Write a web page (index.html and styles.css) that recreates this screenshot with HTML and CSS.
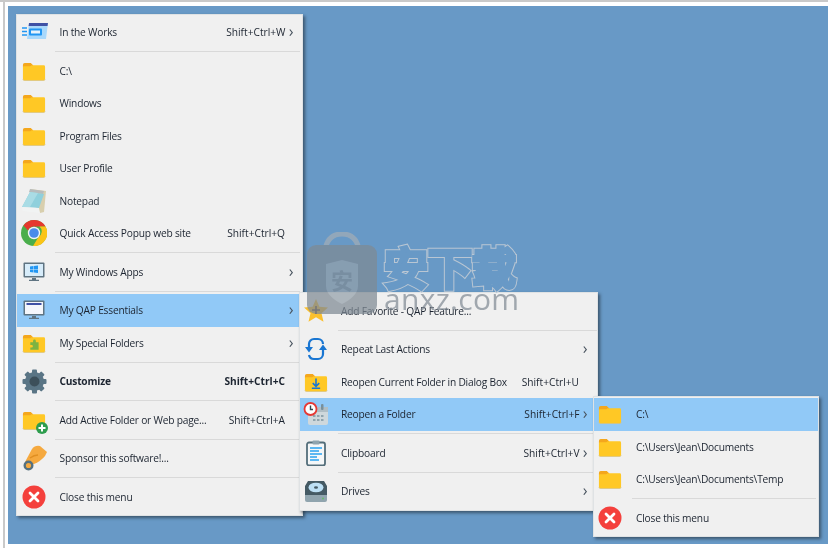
FILE: index.html
```html
<!DOCTYPE html>
<html lang="en">
<head>
<meta charset="utf-8">
<title>Quick Access Popup</title>
<link rel="stylesheet" href="styles.css">
</head>
<body>
<svg class="defs" width="0" height="0" aria-hidden="true">
  <defs>
    <symbol id="folder" viewBox="0 0 26 22">
      <path d="M1 4a2 2 0 0 1 2-2h6.500l2.500 2.500v2H1z" fill="#f4a71d"/>
      <path d="M1 6.500a1 1 0 0 1 1-1h7l1.500-1H23.500a1.500 1.500 0 0 1 1.500 1.500V19.500a1.500 1.500 0 0 1-1.500 1.500H2.500A1.500 1.500 0 0 1 1 19.500z" fill="#ffc825"/>
      <path d="M1 19.500a1.500 1.500 0 0 0 1.500 1.500h21a1.500 1.500 0 0 0 1.500-1.500" fill="none" stroke="#d9c27e" stroke-width=".8"/>
    </symbol>
    <symbol id="close" viewBox="0 0 24 24">
      <circle cx="12" cy="12" r="11.500" fill="#f4403c"/>
      <path d="M8 8l8 8M16 8l-8 8" stroke="#fff" stroke-width="2.800" stroke-linecap="round"/>
    </symbol>
  </defs>
</svg>

<main class="desktop">
  <section class="menu menu-main">
    <div class="row">
      <span class="ico"><svg width="27" height="20" viewBox="0 0 27 20"><path d="M8 1h19l-2 16H6z" fill="#a9d8fb"/><path d="M8 1h19l-.5 3H7.600z" fill="#3f51a5"/><rect x="8" y="6.500" width="13" height="7" rx="1" fill="#2196f3"/><rect x="10" y="8.500" width="9" height="3" fill="#e8f3fb"/><path d="M1 6h5M1 9.500h5M1 13h5" stroke="#2196f3" stroke-width="1.500"/></svg></span>
      <span class="label">In the Works</span><span class="key">Shift+Ctrl+W</span><span class="arrow">›</span>
    </div>
    <div class="sep"></div>
    <div class="row"><span class="ico"><svg class="fold"><use href="#folder"/></svg></span><span class="label">C:\</span></div>
    <div class="row"><span class="ico"><svg class="fold"><use href="#folder"/></svg></span><span class="label">Windows</span></div>
    <div class="row"><span class="ico"><svg class="fold"><use href="#folder"/></svg></span><span class="label">Program Files</span></div>
    <div class="row"><span class="ico"><svg class="fold"><use href="#folder"/></svg></span><span class="label">User Profile</span></div>
    <div class="row">
      <span class="ico"><svg width="27" height="26" viewBox="0 0 27 26"><path d="M9 1l16 2-2 21-4 1L9 10z" fill="#d8cfae"/><path d="M9 1l14 2-1 3L8 4z" fill="#b7bcbd"/><path d="M9 4l14 2-5 14-17-1z" fill="#8fd0dc"/><path d="M9 4l8 1-8 14H1z" fill="#a9dce5"/><path d="M1 19l17 1 1 5-17-2z" fill="#f1f3f3"/></svg></span>
      <span class="label">Notepad</span>
    </div>
    <div class="row">
      <span class="ico"><svg width="26" height="26" viewBox="0 0 26 26"><circle cx="13" cy="13" r="13" fill="#4aae4c"/><path d="M13 0a13 13 0 0 1 11.500 6.500H13a6.500 6.500 0 0 0-6 4L2.500 5.500A13 13 0 0 1 13 0z" fill="#e5382e"/><path d="M24.500 6.500A13 13 0 0 1 12 26l5.500-9a6.500 6.500 0 0 0 1-10.500z" fill="#fbc417"/><circle cx="13" cy="13" r="6.200" fill="#f3f3f3"/><circle cx="13" cy="13" r="4.800" fill="#4a8be8"/></svg></span>
      <span class="label">Quick Access Popup web site</span><span class="key key-end">Shift+Ctrl+Q</span>
    </div>
    <div class="sep"></div>
    <div class="row">
      <span class="ico"><svg width="22" height="20" viewBox="0 0 22 20"><rect x=".5" y=".5" width="21" height="15" rx="1" fill="#5f7482"/><rect x="2" y="2" width="18" height="12" fill="#d7ecfa"/><path d="M7 4.500l3.500-.5v3H7zM11 4l4-.5V7h-4zM7 7.500h3.500v3L7 10zM11 7.500h4V11l-4-.5z" fill="#2196f3"/><path d="M9 16h4v1.800h3V19H6v-1.200h3z" fill="#5f7482"/></svg></span>
      <span class="label">My Windows Apps</span><span class="arrow">›</span>
    </div>
    <div class="sep"></div>
    <div class="row active">
      <span class="ico"><svg width="22" height="20" viewBox="0 0 22 20"><rect x=".5" y=".5" width="21" height="15" rx="1" fill="#5f7482"/><rect x="2" y="2" width="18" height="12" fill="#f4f6fb"/><rect x="3.500" y="3" width="15" height="2" fill="#3f51a5"/><path d="M9 16h4v1.800h3V19H6v-1.200h3z" fill="#5f7482"/></svg></span>
      <span class="label">My QAP Essentials</span><span class="arrow">›</span>
    </div>
    <div class="row">
      <span class="ico"><svg class="fold" viewBox="0 0 26 22"><use href="#folder"/><path d="M9 10h3V8.500a1.500 1.500 0 0 1 3 0V10h3v8H9v-2.500h1.500a1.300 1.300 0 0 0 0-2.600H9z" fill="#7cb342"/></svg></span>
      <span class="label">My Special Folders</span><span class="arrow">›</span>
    </div>
    <div class="sep"></div>
    <div class="row strong">
      <span class="ico"><svg width="25" height="25" viewBox="0 0 25 25"><g fill="#5a7585"><circle cx="12.500" cy="12.500" r="9.500"/><rect x="10" y=".5" width="5" height="24" rx="1"/><rect x="10" y=".5" width="5" height="24" rx="1" transform="rotate(45 12.500 12.500)"/><rect x="10" y=".5" width="5" height="24" rx="1" transform="rotate(90 12.500 12.500)"/><rect x="10" y=".5" width="5" height="24" rx="1" transform="rotate(135 12.500 12.500)"/></g><circle cx="12.500" cy="12.500" r="5" fill="#3c4f5a"/></svg></span>
      <span class="label">Customize</span><span class="key key-end">Shift+Ctrl+C</span>
    </div>
    <div class="sep"></div>
    <div class="row">
      <span class="ico ico-badge"><svg class="fold"><use href="#folder"/></svg><svg class="badge" width="12" height="12" viewBox="0 0 12 12"><circle cx="6" cy="6" r="6" fill="#2e9d4e"/><path d="M6 2.500v7M2.500 6h7" stroke="#fff" stroke-width="2"/></svg></span>
      <span class="label">Add Active Folder or Web page...</span><span class="key key-end">Shift+Ctrl+A</span>
    </div>
    <div class="sep"></div>
    <div class="row">
      <span class="ico"><svg width="26" height="27" viewBox="0 0 26 27"><path d="M4 17L11 4Q14 0 19 1L26 7L24 11Q20 16 13 19L9 20z" fill="#f5a93f"/><path d="M9 13q4-3 8-3" fill="none" stroke="#e08f22" stroke-width="1.500"/><circle cx="7.500" cy="20.500" r="3.800" fill="#f5a93f" stroke="#54707f" stroke-width="2.400"/></svg></span>
      <span class="label">Sponsor this software!...</span>
    </div>
    <div class="sep"></div>
    <div class="row"><span class="ico"><svg width="24" height="24"><use href="#close"/></svg></span><span class="label">Close this menu</span></div>
  </section>

  <section class="menu menu-sub">
    <div class="row">
      <span class="ico"><svg width="24" height="23" viewBox="0 0 24 23"><path d="M12 0l3.400 7.800 8.600.8-6.500 5.700 2 8.400L12 18.300 4.500 22.700l2-8.400L0 8.600l8.600-.8z" fill="#fbc02d"/><path d="M12 7v8M8 11h8" stroke="#5d4037" stroke-width="1.600"/></svg></span>
      <span class="label">Add Favorite - QAP Feature...</span>
    </div>
    <div class="sep"></div>
    <div class="row">
      <span class="ico"><svg width="22" height="24" viewBox="0 0 22 24"><path d="M4 11V7a5 5 0 0 1 5-5h4a5 5 0 0 1 5 5" fill="none" stroke="#1976d2" stroke-width="2.200"/><path d="M18 12v5a5 5 0 0 1-5 5H9a5 5 0 0 1-5-4" fill="none" stroke="#1976d2" stroke-width="2.200"/><path d="M0 10h8l-4 5.500zM14 13h8l-4-5.500z" fill="#1976d2"/></svg></span>
      <span class="label">Repeat Last Actions</span><span class="arrow">›</span>
    </div>
    <div class="row">
      <span class="ico"><svg class="fold" viewBox="0 0 26 22"><use href="#folder"/><path d="M13 7v8M9.500 12l3.500 3.500 3.500-3.500M8.500 17.500h9" fill="none" stroke="#1976d2" stroke-width="1.700"/></svg></span>
      <span class="label">Reopen Current Folder in Dialog Box</span><span class="key key-end">Shift+Ctrl+U</span>
    </div>
    <div class="row active">
      <span class="ico"><svg width="26" height="24" viewBox="0 0 26 24"><rect x="5" y="5" width="20" height="18" rx="2" fill="#cfd8dc"/><rect x="5" y="5" width="20" height="5" fill="#b0bec5"/><rect x="18" y="2" width="2.500" height="6" rx="1" fill="#78909c"/><g fill="#90a4ae"><rect x="10" y="13" width="2.500" height="2"/><rect x="14" y="13" width="2.500" height="2"/><rect x="18" y="13" width="2.500" height="2"/><rect x="10" y="17" width="2.500" height="2"/><rect x="14" y="17" width="2.500" height="2"/><rect x="18" y="17" width="2.500" height="2"/></g><circle cx="7.500" cy="7" r="6" fill="#fff" stroke="#e53935" stroke-width="1.800"/><path d="M7.500 3.500V7.500H10" fill="none" stroke="#37474f" stroke-width="1.400"/></svg></span>
      <span class="label">Reopen a Folder</span><span class="key">Shift+Ctrl+F</span><span class="arrow">›</span>
    </div>
    <div class="sep"></div>
    <div class="row">
      <span class="ico"><svg width="20" height="26" viewBox="0 0 20 26"><rect x="1" y="2.500" width="18" height="23" rx="2" fill="#f5f7f8" stroke="#546e7a" stroke-width="1.800"/><rect x="6.500" y=".5" width="7" height="4" rx="1" fill="#90a4ae"/><path d="M4 8h12M4 11h9M4 14h12M4 17h7M4 20h9" stroke="#29a3f0" stroke-width="1.500"/></svg></span>
      <span class="label">Clipboard</span><span class="key">Shift+Ctrl+V</span><span class="arrow">›</span>
    </div>
    <div class="sep"></div>
    <div class="row">
      <span class="ico"><svg width="22" height="22" viewBox="0 0 22 22"><path d="M3 1h16l3 5v10H0V6z" fill="#455a64"/><path d="M0 15h22v5a2 2 0 0 1-2 2H2a2 2 0 0 1-2-2z" fill="#90a4ae"/><ellipse cx="11" cy="7.500" rx="7.500" ry="4.800" fill="#bde0f5"/><ellipse cx="11" cy="7.500" rx="2" ry="1.200" fill="#455a64"/><circle cx="18" cy="18.500" r="1" fill="#66bb6a"/></svg></span>
      <span class="label">Drives</span><span class="arrow">›</span>
    </div>
  </section>

  <section class="menu menu-paths">
    <div class="row active"><span class="ico"><svg class="fold"><use href="#folder"/></svg></span><span class="label">C:\</span></div>
    <div class="row"><span class="ico"><svg class="fold"><use href="#folder"/></svg></span><span class="label">C:\Users\Jean\Documents</span></div>
    <div class="row"><span class="ico"><svg class="fold"><use href="#folder"/></svg></span><span class="label">C:\Users\Jean\Documents\Temp</span></div>
    <div class="sep"></div>
    <div class="row"><span class="ico"><svg width="24" height="24"><use href="#close"/></svg></span><span class="label">Close this menu</span></div>
  </section>

  <div class="watermark">
    <svg class="bag" width="72" height="84" viewBox="0 0 72 84"><path d="M19 18C21 6 28 2 36 2s15 4 17 16" fill="none" stroke="#a3adb6" stroke-width="5"/><rect x="1" y="13" width="70" height="69" rx="9" fill="#7f8a94"/><path d="M20 32l16-4 16 4v22c0 8-8 14-16 18-8-4-16-10-16-18z" fill="#94a0aa"/><text x="36" y="57" class="bag-mark">安</text></svg>
    <div class="wm-text">
      <div class="wm-cn" data-text="安下载">安下载</div>
      <div class="wm-en">anxz.com</div>
    </div>
  </div>
</main>
</body>
</html>
```

FILE: styles.css
```css
html, body {
  margin: 0;
  padding: 0;
  background: #fff;
}

body {
  width: 828px;
  height: 548px;
  overflow: hidden;
  font-family: "Open Sans", "Noto Sans", sans-serif;
  font-size: 10.2px;
  letter-spacing: -0.2px;
  color: #1c2430;
  box-sizing: border-box;
  border-top: 2px solid #c9c9c9;
  padding: 4px 0 4px 8px;
  position: relative;
}

body::before {
  content: "";
  position: absolute;
  left: 3px;
  top: 0;
  bottom: 0;
  width: 1.5px;
  background: #c9c9c9;
}

.defs {
  position: absolute;
}

.desktop {
  position: relative;
  width: 820px;
  height: 538px;
  background: #6899c6;
  filter: blur(0.4px);
}

.menu {
  position: absolute;
  box-sizing: border-box;
  background: #f0f0f0;
  border: 1.5px solid #dfe2e4;
  box-shadow: 2px 2px 3px rgba(30, 40, 50, 0.6);
  display: flex;
  flex-direction: column;
}

.menu-main {
  left: 8px;
  top: 8px;
  width: 287px;
  height: 502px;
  padding-top: 1px;
  --ico: 34px;
  --gap: 8.5px;
  --end: 6px;
}

.menu-sub {
  left: 291px;
  top: 286px;
  width: 299px;
  height: 219px;
  padding-top: 1.5px;
  --ico: 31px;
  --gap: 10px;
  --end: 7px;
}

.menu-paths {
  left: 585px;
  top: 390px;
  width: 226px;
  height: 141px;
  padding-top: 1px;
  --ico: 32px;
  --gap: 10px;
  --end: 7px;
}

.row {
  display: flex;
  align-items: center;
  height: 32.5px;
  flex: none;
  padding-right: var(--end);
}

.active {
  background: #91c9f7;
}

.strong {
  font-weight: 700;
}

.ico {
  flex: none;
  width: var(--ico);
  margin-right: var(--gap);
  height: 100%;
  display: flex;
  align-items: center;
  justify-content: center;
  position: relative;
}

.ico-badge .badge {
  position: absolute;
  right: 3px;
  bottom: 2px;
}

.fold {
  width: 24px;
  height: 20.5px;
}

.label {
  flex: 1;
  white-space: nowrap;
}

.key {
  white-space: nowrap;
  letter-spacing: 0;
  margin-right: 0.5px;
}

.key-end {
  margin-right: 11px;
}

.arrow {
  width: 10px;
  text-align: center;
  font-size: 16px;
  line-height: 1;
  color: #4a5560;
  margin-top: -2px;
}

.sep {
  flex: none;
  height: 6px;
  margin-left: 38px;
  margin-right: 2px;
  display: flex;
  align-items: center;
}

.sep::after {
  content: "";
  flex: 1;
  height: 1px;
  background: #d9d9d9;
}

.menu-sub .sep {
  margin-right: 0;
}

.watermark {
  position: absolute;
  left: 298px;
  top: 226px;
  display: flex;
  gap: 5px;
  pointer-events: none;
  letter-spacing: 0;
}

.bag {
  opacity: 0.72;
}

.bag-mark {
  font-family: "Noto Sans CJK SC", sans-serif;
  font-size: 22px;
  font-weight: 700;
  text-anchor: middle;
  fill: #7f8a94;
}

.wm-text {
  display: flex;
  flex-direction: column;
  align-items: flex-start;
  padding-top: 10px;
}

.wm-cn {
  position: relative;
  font-family: "Noto Sans CJK SC", sans-serif;
  font-weight: 500;
  font-size: 44px;
  line-height: 48px;
  margin-left: 1px;
  color: transparent;
  -webkit-text-stroke: 6px #b9c6d3;
}

.wm-cn::after {
  content: attr(data-text);
  position: absolute;
  left: 0;
  top: 0;
  color: #6899c6;
  -webkit-text-stroke: 4px #6899c6;
}

.wm-en {
  font-family: "Open Sans", sans-serif;
  font-size: 30px;
  line-height: 26px;
  letter-spacing: 0.3px;
  color: rgba(125, 135, 145, 0.7);
  margin-top: -4px;
  margin-left: 1px;
}
```
